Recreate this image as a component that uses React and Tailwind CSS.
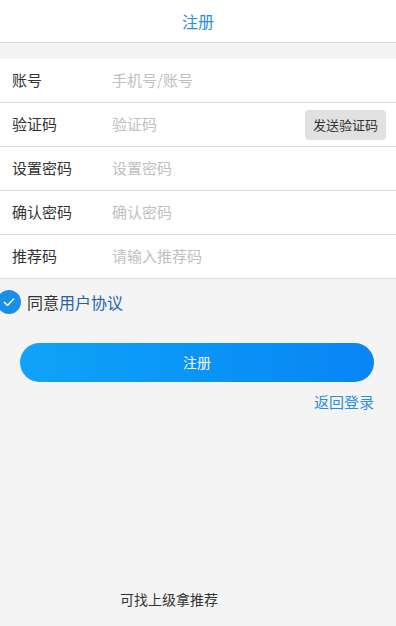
const FIELDS = [
  { label: '账号', placeholder: '手机号/账号' },
  { label: '验证码', placeholder: '验证码', send: true },
  { label: '设置密码', placeholder: '设置密码' },
  { label: '确认密码', placeholder: '确认密码' },
  { label: '推荐码', placeholder: '请输入推荐码' },
];

const FONT = "font-['Microsoft_YaHei','Noto_Sans_CJK_SC',sans-serif]";

function Field({ label, placeholder, send }) {
  return (
    <div className="flex items-center h-[44px] border-b border-[#dcdcdc] pl-3 pr-[10px]">
      <span className="w-[100px] text-[15px] text-[#333]">{label}</span>
      <span className="flex-1 text-[15px] text-[#c0c0c0]">{placeholder}</span>
      {send && (
        <button className="h-[30px] px-2 rounded bg-[#e1e1e1] text-[13px] text-[#333]">
          发送验证码
        </button>
      )}
    </div>
  );
}

export default function App() {
  return (
    <div className={`${FONT} w-[396px] h-[626px] bg-[#f4f4f4] flex flex-col overflow-hidden`}>
      <div className="h-[43px] bg-white border-b border-[#dcdcdc] flex items-center justify-center">
        <span className="text-[16px] text-[#2a8fe0]">注册</span>
      </div>

      <div className="mt-[16px] bg-white">
        {FIELDS.map((f) => (
          <Field key={f.label} {...f} />
        ))}
      </div>

      <div className="flex items-center h-[45px]">
        <span className="-ml-[3px] w-[24px] h-[24px] rounded-full bg-[#1a8fe8] flex items-center justify-center">
          <svg className="w-[16px] h-[16px]" viewBox="0 0 24 24" fill="none" stroke="white" strokeWidth="2.2" strokeLinecap="round" strokeLinejoin="round">
            <polyline points="5 12.5 10 17 19 7.5" />
          </svg>
        </span>
        <span className="ml-[6px] text-[16px] text-[#333]">
          同意<span className="text-[#2563b0]">用户协议</span>
        </span>
      </div>

      <button className="mt-[19px] ml-[20px] mr-[22px] h-[39px] rounded-full bg-gradient-to-r from-[#10a4f8] to-[#0a84f6] text-white text-[14px]">
        注册
      </button>

      <div className="mt-[9px] pr-[22px] text-right text-[15px] text-[#2a8fe0]">返回登录</div>

      <div className="mt-auto mb-[16px] pl-[120px] text-[14px] text-[#333]">可找上级拿推荐</div>
    </div>
  );
}
